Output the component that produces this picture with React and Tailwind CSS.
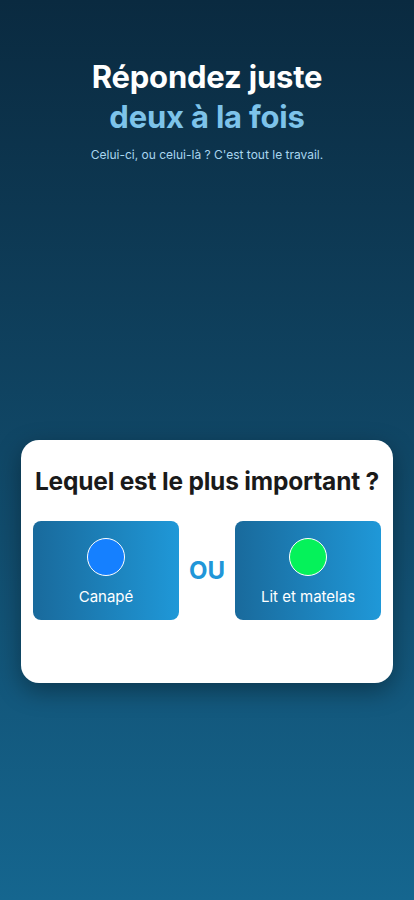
export default function App() {
  return (
    <div
      className="w-[414px] h-[900px] flex flex-col items-center bg-gradient-to-b from-[#0a2a40] to-[#15668f] px-[21px]"
      style={{ fontFamily: 'Inter, "Noto Sans", sans-serif' }}
    >
      <div className="pt-[57px] flex flex-col items-center text-center">
        <h1 className="text-[31px] leading-[40px] font-bold text-white tracking-[-0.2px]">Répondez juste</h1>
        <h2 className="text-[31px] leading-[40px] font-bold text-[#7dc3ea] tracking-[-0.2px]">deux à la fois</h2>
        <p className="mt-[9px] text-[12px] text-[#a9d6ef]">Celui-ci, ou celui-là ? C'est tout le travail.</p>
      </div>

      <div className="mt-[276px] w-full h-[243px] bg-white rounded-[18px] shadow-[0_8px_24px_rgba(0,0,0,0.35)] flex flex-col items-center px-[12px]">
        <p className="mt-[26px] text-[24.5px] leading-[30px] font-bold text-[#1a1a1a] tracking-[-0.2px] whitespace-nowrap">Lequel est le plus important ?</p>
        <div className="mt-[25px] w-full flex items-center justify-between">
          <button className="w-[146px] h-[99px] rounded-[8px] bg-gradient-to-r from-[#196a9c] to-[#1f98d8] flex flex-col items-center pt-[17px]">
            <span className="w-[38px] h-[38px] rounded-full bg-[#1580ff] border-[1.5px] border-white" />
            <span className="mt-[10px] text-[15px] text-white">Canapé</span>
          </button>
          <span className="text-[24px] font-bold text-[#2196d8]">OU</span>
          <button className="w-[146px] h-[99px] rounded-[8px] bg-gradient-to-r from-[#196a9c] to-[#1f98d8] flex flex-col items-center pt-[17px]">
            <span className="w-[38px] h-[38px] rounded-full bg-[#05f25a] border-[1.5px] border-white" />
            <span className="mt-[10px] text-[15px] text-white">Lit et matelas</span>
          </button>
        </div>
      </div>
    </div>
  );
}
